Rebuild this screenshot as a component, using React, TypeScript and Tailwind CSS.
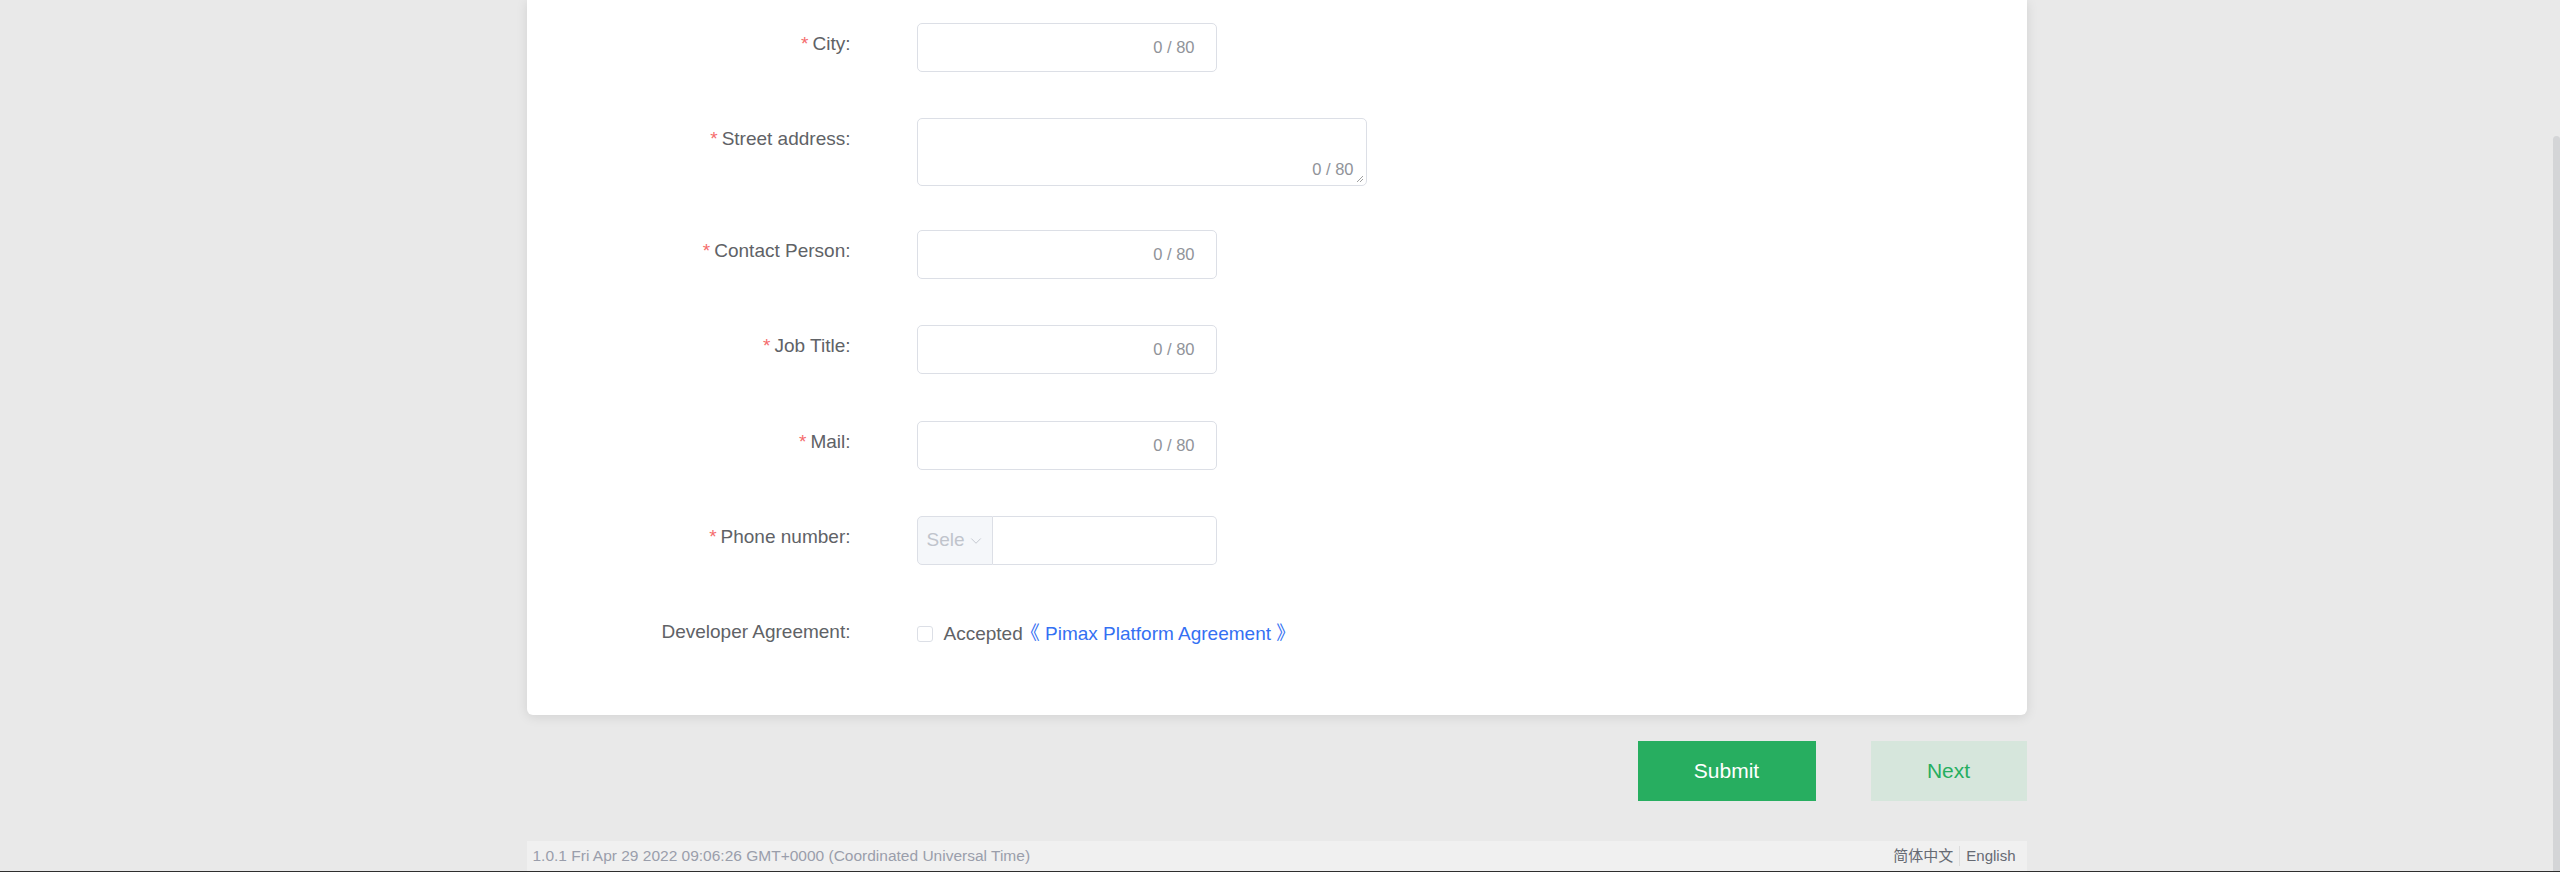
import { ChevronDown } from "lucide-react";

function Label({ text, required }: { text: string; required?: boolean }) {
  return (
    <div className="w-[324px] shrink-0 text-right text-[19px] leading-[42px] text-[#606266] whitespace-nowrap">
      {required && <span className="text-[#f56c6c] mr-[4px]">*</span>}
      {text}:
    </div>
  );
}

function CountInput() {
  return (
    <div className="ml-[66px] w-[300px] h-[49px] border border-[#dcdfe6] rounded-[5px] bg-white flex items-center justify-end pr-[21px]">
      <span className="text-[16.5px] text-[#909399]">0 / 80</span>
    </div>
  );
}

function Row({
  label,
  required,
  children,
  mb = "mb-[46px]",
}: {
  label: string;
  required?: boolean;
  children: React.ReactNode;
  mb?: string;
}) {
  return (
    <div className={`flex items-start ${mb}`}>
      <Label text={label} required={required} />
      {children}
    </div>
  );
}

export default function App() {
  return (
    <div className="w-[2560px] h-[872px] flex flex-col bg-[#e9e9e9] font-['Liberation_Sans','Noto_Sans_CJK_SC',sans-serif] overflow-hidden">
      <div className="flex flex-1 min-h-0">
        <div className="flex-1 flex flex-col items-center">
          <div className="w-[1500px] flex flex-col">
            {/* Card */}
            <div className="bg-white rounded-b-[6px] shadow-[0_2px_12px_0_rgba(0,0,0,0.1)] pt-[23px] pb-[58px]">
              <Row label="City" required>
                <CountInput />
              </Row>
              <Row label="Street address" required mb="mb-[44px]">
                <div className="relative ml-[66px] w-[450px] h-[68px] border border-[#dcdfe6] rounded-[5px] bg-white flex items-end justify-end pr-[12px] pb-[7px]">
                  <span className="text-[16.5px] leading-[18px] text-[#909399]">0 / 80</span>
                  <svg
                    className="absolute right-[2px] bottom-[2px]"
                    width="8"
                    height="8"
                    viewBox="0 0 8 8"
                  >
                    <line x1="1" y1="7" x2="7" y2="1" stroke="#888" strokeWidth="0.8" />
                    <line x1="4" y1="7" x2="7" y2="4" stroke="#888" strokeWidth="0.8" />
                  </svg>
                </div>
              </Row>
              <Row label="Contact Person" required>
                <CountInput />
              </Row>
              <Row label="Job Title" required mb="mb-[47px]">
                <CountInput />
              </Row>
              <Row label="Mail" required>
                <CountInput />
              </Row>
              <Row label="Phone number" required>
                <div className="ml-[66px] w-[300px] h-[49px] flex">
                  <div className="w-[76px] h-full bg-[#f5f7fa] border border-[#dcdfe6] rounded-l-[5px] flex items-center pl-[9px] gap-[2px]">
                    <span className="text-[19px] text-[#c0c4cc]">Sele</span>
                    <ChevronDown size={18} strokeWidth={1.2} color="#c0c4cc" />
                  </div>
                  <div className="flex-1 h-full bg-white border border-l-0 border-[#dcdfe6] rounded-r-[5px]" />
                </div>
              </Row>
              <Row label="Developer Agreement" mb="mb-0">
                <div className="ml-[66px] h-[46px] flex items-center">
                  <div className="w-[16px] h-[16px] border border-[#dcdfe6] rounded-[3px] bg-white" />
                  <span className="ml-[11px] text-[19px] text-[#606266]">Accepted</span>
                  <span className="-ml-[2px] text-[19px] text-[#3470f3] whitespace-nowrap">
                    《 Pimax Platform Agreement 》
                  </span>
                </div>
              </Row>
            </div>

            {/* Buttons */}
            <div className="mt-[26px] flex justify-end gap-[55px]">
              <button className="w-[178px] h-[60px] bg-[#27ae60] text-white text-[21px] flex items-center justify-center">
                Submit
              </button>
              <button className="w-[156px] h-[60px] bg-[#d6e6dc] text-[#27ae60] text-[21px] flex items-center justify-center">
                Next
              </button>
            </div>

            {/* Footer */}
            <div className="mt-[40px] h-[30px] bg-[#f0f0f0] flex items-center justify-between pl-[6px] pr-[11px]">
              <span className="text-[15.5px] text-[#9a9eab] whitespace-nowrap">
                1.0.1 Fri Apr 29 2022 09:06:26 GMT+0000 (Coordinated Universal Time)
              </span>
              <div className="flex items-center text-[15px] text-[#666a73]">
                <span>简体中文</span>
                <span className="mx-[6px] w-px h-[20px] bg-[#dcdcdc]" />
                <span>English</span>
              </div>
            </div>
          </div>
        </div>
        {/* Scrollbar */}
        <div className="w-[7px] flex flex-col">
          <div className="mt-[136px] flex-1 bg-[#d4d5d7] rounded-t-[4px]" />
        </div>
      </div>
      <div className="h-px bg-[#2e2e2e]" />
    </div>
  );
}
